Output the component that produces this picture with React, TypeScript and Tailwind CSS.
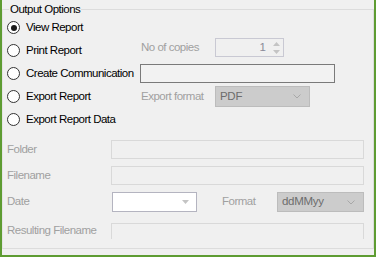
import React from 'react';

const font = { fontFamily: '"Liberation Sans", Arial, sans-serif' };

const Radio: React.FC<{ label: string; checked?: boolean }> = ({ label, checked }) => (
  <label className="flex h-[23px] items-center gap-[6px] text-[11.5px] tracking-[-0.5px] text-black">
    <span className="flex h-[13px] w-[13px] items-center justify-center rounded-full border border-[#333333] bg-white">
      {checked && <span className="h-[6px] w-[6px] rounded-full bg-[#1a1a1a]" />}
    </span>
    {label}
  </label>
);

const Chevron = () => (
  <svg width="8" height="5" viewBox="0 0 8 5" className="shrink-0">
    <polyline points="0.5,0.5 4,4 7.5,0.5" fill="none" stroke="#a8a8a8" strokeWidth="1" />
  </svg>
);

const Combo: React.FC<{ value: string; className: string }> = ({ value, className }) => (
  <div className={`flex items-center justify-between border border-[#bcbcbc] bg-[#cccccc] pl-[4px] pr-[8px] text-[11.5px] tracking-[-0.3px] text-[#6d6d6d] ${className}`}>
    <span>{value}</span>
    <Chevron />
  </div>
);

const Field: React.FC<{ label: string; children: React.ReactNode; className?: string }> = ({ label, children, className }) => (
  <div className={`flex items-center ${className ?? ''}`}>
    <span className="w-[104px] text-[11.5px] tracking-[-0.5px] text-[#a0a0a0]">{label}</span>
    {children}
  </div>
);

export default function App() {
  return (
    <div
      className="h-[257px] w-[376px] overflow-hidden border-b-2 border-l-2 border-r-2 border-[#5e9c32] bg-[#f0f0f0]"
      style={font}
    >
      <fieldset className="mt-[2px] h-[247px] w-full border border-[#dcdcdc] border-l-[#e4e4e4]">
        <legend className="ml-[6px] px-[1px] text-[11.5px] leading-[14px] tracking-[-0.5px] text-black">Output Options</legend>

        <div className="flex">
          {/* radio choices */}
          <div className="flex w-[137px] flex-col pl-[4px]">
            <Radio label="View Report" checked />
            <Radio label="Print Report" />
            <Radio label="Create Communication" />
            <Radio label="Export Report" />
            <Radio label="Export Report Data" />
          </div>

          {/* options for the choices */}
          <div className="flex flex-col pt-[22px]">
            <div className="flex items-center">
              <span className="w-[75px] pl-[1px] text-[11.5px] tracking-[-0.5px] text-[#a0a0a0]">No of copies</span>
              <div className="flex h-[19px] w-[69px] items-center justify-end border border-[#c9c9d3] bg-[#f0f0f0] pr-[3px] text-[11.5px] text-[#8a8a98]">
                <span className="mr-[7px]">1</span>
                <div className="flex flex-col gap-[4px]">
                  <svg width="7" height="4" viewBox="0 0 7 4"><polygon points="0,4 3.5,0 7,4" fill="#c4c4c4" /></svg>
                  <svg width="7" height="4" viewBox="0 0 7 4"><polygon points="0,0 3.5,4 7,0" fill="#c4c4c4" /></svg>
                </div>
              </div>
            </div>
            <div className="mt-[7px] h-[19px] w-[195px] border border-[#7a7a7a] bg-[#f2f2f2]" />
            <div className="mt-[3px] flex items-center">
              <span className="w-[75px] pl-[1px] text-[11.5px] tracking-[-0.5px] text-[#a0a0a0]">Export format</span>
              <Combo value="PDF" className="h-[21px] w-[95px]" />
            </div>
          </div>
        </div>

        {/* file naming */}
        <div className="pl-[4px] pt-[9px]">
          <Field label="Folder">
            <div className="h-[19px] w-[253px] border border-[#d9d9d9] bg-[#f0f0f0]" />
          </Field>
          <Field label="Filename" className="mt-[7px]">
            <div className="h-[19px] w-[253px] border border-[#d9d9d9] bg-[#f0f0f0]" />
          </Field>
          <Field label="Date" className="mt-[7px]">
            <div className="ml-[1px] flex h-[20px] w-[85px] items-center justify-end border border-[#b4b4c0] bg-white pr-[7px]">
              <svg width="7" height="4" viewBox="0 0 7 4"><polygon points="0,0 3.5,4 7,0" fill="#c4c4c4" /></svg>
            </div>
            <span className="ml-[25px] w-[55px] text-[11.5px] tracking-[-0.5px] text-[#a0a0a0]">Format</span>
            <Combo value="ddMMyy" className="h-[20px] w-[87px]" />
          </Field>
          <Field label="Resulting Filename" className="mt-[10px]">
            <div className="h-[16px] w-[253px] overflow-hidden">
              <div className="h-[19px] w-[253px] border border-[#d9d9d9] bg-[#f0f0f0]" />
            </div>
          </Field>
        </div>
      </fieldset>
    </div>
  );
}
